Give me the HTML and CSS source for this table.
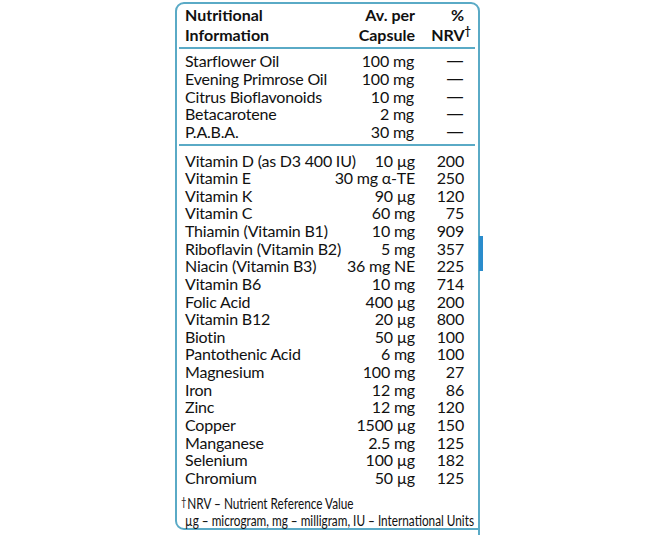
FILE: index.html
```html
<!DOCTYPE html>
<html>
<head>
<meta charset="utf-8">
<link rel="stylesheet" href="styles.css">
</head>
<body>
<div class="panel">
  <div class="head">
    <div class="hname">Nutritional<br>Information</div>
    <div class="hamt">Av. per<br>Capsule</div>
    <div class="hnrv">%<br>NRV<sup class="dag">†</sup></div>
  </div>
  <div class="rule"></div>
  <div class="group first">
    <div class="row"><span class="n">Starflower Oil</span><span class="a">100 mg</span><span class="v dash">—</span></div>
    <div class="row"><span class="n">Evening Primrose Oil</span><span class="a">100 mg</span><span class="v dash">—</span></div>
    <div class="row"><span class="n">Citrus Bioflavonoids</span><span class="a">10 mg</span><span class="v dash">—</span></div>
    <div class="row"><span class="n">Betacarotene</span><span class="a">2 mg</span><span class="v dash">—</span></div>
    <div class="row"><span class="n">P.A.B.A.</span><span class="a">30 mg</span><span class="v dash">—</span></div>
  </div>
  <div class="rule rule2"></div>
  <div class="group second">
    <div class="row"><span class="n">Vitamin D (as D3 400 IU)</span><span class="a">10 µg</span><span class="v">200</span></div>
    <div class="row"><span class="n">Vitamin E</span><span class="a">30 mg α-TE</span><span class="v">250</span></div>
    <div class="row"><span class="n">Vitamin K</span><span class="a">90 µg</span><span class="v">120</span></div>
    <div class="row"><span class="n">Vitamin C</span><span class="a">60 mg</span><span class="v">75</span></div>
    <div class="row"><span class="n">Thiamin (Vitamin B1)</span><span class="a">10 mg</span><span class="v">909</span></div>
    <div class="row"><span class="n">Riboflavin (Vitamin B2)</span><span class="a">5 mg</span><span class="v">357</span></div>
    <div class="row"><span class="n">Niacin (Vitamin B3)</span><span class="a">36 mg NE</span><span class="v">225</span></div>
    <div class="row"><span class="n">Vitamin B6</span><span class="a">10 mg</span><span class="v">714</span></div>
    <div class="row"><span class="n">Folic Acid</span><span class="a">400 µg</span><span class="v">200</span></div>
    <div class="row"><span class="n">Vitamin B12</span><span class="a">20 µg</span><span class="v">800</span></div>
    <div class="row"><span class="n">Biotin</span><span class="a">50 µg</span><span class="v">100</span></div>
    <div class="row"><span class="n">Pantothenic Acid</span><span class="a">6 mg</span><span class="v">100</span></div>
    <div class="row"><span class="n">Magnesium</span><span class="a">100 mg</span><span class="v">27</span></div>
    <div class="row"><span class="n">Iron</span><span class="a">12 mg</span><span class="v">86</span></div>
    <div class="row"><span class="n">Zinc</span><span class="a">12 mg</span><span class="v">120</span></div>
    <div class="row"><span class="n">Copper</span><span class="a">1500 µg</span><span class="v">150</span></div>
    <div class="row"><span class="n">Manganese</span><span class="a">2.5 mg</span><span class="v">125</span></div>
    <div class="row"><span class="n">Selenium</span><span class="a">100 µg</span><span class="v">182</span></div>
    <div class="row"><span class="n">Chromium</span><span class="a">50 µg</span><span class="v">125</span></div>
  </div>
  <div class="foot">
    <div class="fline"><span class="fdag">†</span>NRV – Nutrient Reference Value</div>
    <div class="fline">µg – microgram, mg – milligram, IU – International Units</div>
  </div>
</div>
</body>
</html>
```
FILE: styles.css
```css
html, body {
  margin: 0;
  padding: 0;
  background: #ffffff;
}
body {
  width: 654px;
  height: 535px;
  overflow: hidden;
  font-family: Lato, "Open Sans", sans-serif;
  color: #111111;
}
.panel {
  position: relative;
  box-sizing: border-box;
  width: 305px;
  height: 528px;
  margin: 2px 0 0 175px;
  border: 2px solid #5aaac6;
  border-radius: 9px 9px 0 9px;
  padding: 1px 14px 0 8px;
}
.panel::before {
  content: "";
  position: absolute;
  right: -5px;
  top: 232px;
  width: 4px;
  height: 35px;
  background: #2a8ccc;
}
.panel::after {
  content: "";
  position: absolute;
  right: -2px;
  top: 100%;
  width: 2px;
  height: 8px;
  background: #5aaac6;
}
.head {
  display: flex;
  font-weight: bold;
  font-size: 16px;
  line-height: 20px;
}
.hname { flex: 1; }
.hamt { text-align: right; }
.hnrv {
  width: 49px;
  text-align: right;
}
.dag {
  font-size: 11px;
  line-height: 0;
  vertical-align: 6px;
  margin-right: -7px;
}
.rule {
  height: 2px;
  background: #5aaac6;
  margin: 2px -11px 0 -6px;
}
.rule2 {
  margin-top: 3.5px;
}
.group.first { margin-top: 3px; }
.group.second { margin-top: 5.25px; }
.row {
  display: flex;
  font-size: 16px;
  line-height: 17.62px;
  letter-spacing: -0.2px;
  white-space: nowrap;
}
.first .row { line-height: 17.75px; }
.n { flex: 1; }
.a { text-align: right; }
.v {
  width: 49px;
  text-align: right;
}
.dash {
  font-family: "Liberation Sans", sans-serif;
  font-size: 16px;
  letter-spacing: 0;
  margin-right: 1px;
}
.foot {
  margin-top: 7px;
  font-size: 15px;
  line-height: 17px;
  white-space: nowrap;
}
.fline {
  transform: scaleX(0.785);
  transform-origin: left center;
}
.fdag {
  font-size: 12px;
  vertical-align: 3px;
  margin-left: -5px;
  margin-right: 1px;
}
```
